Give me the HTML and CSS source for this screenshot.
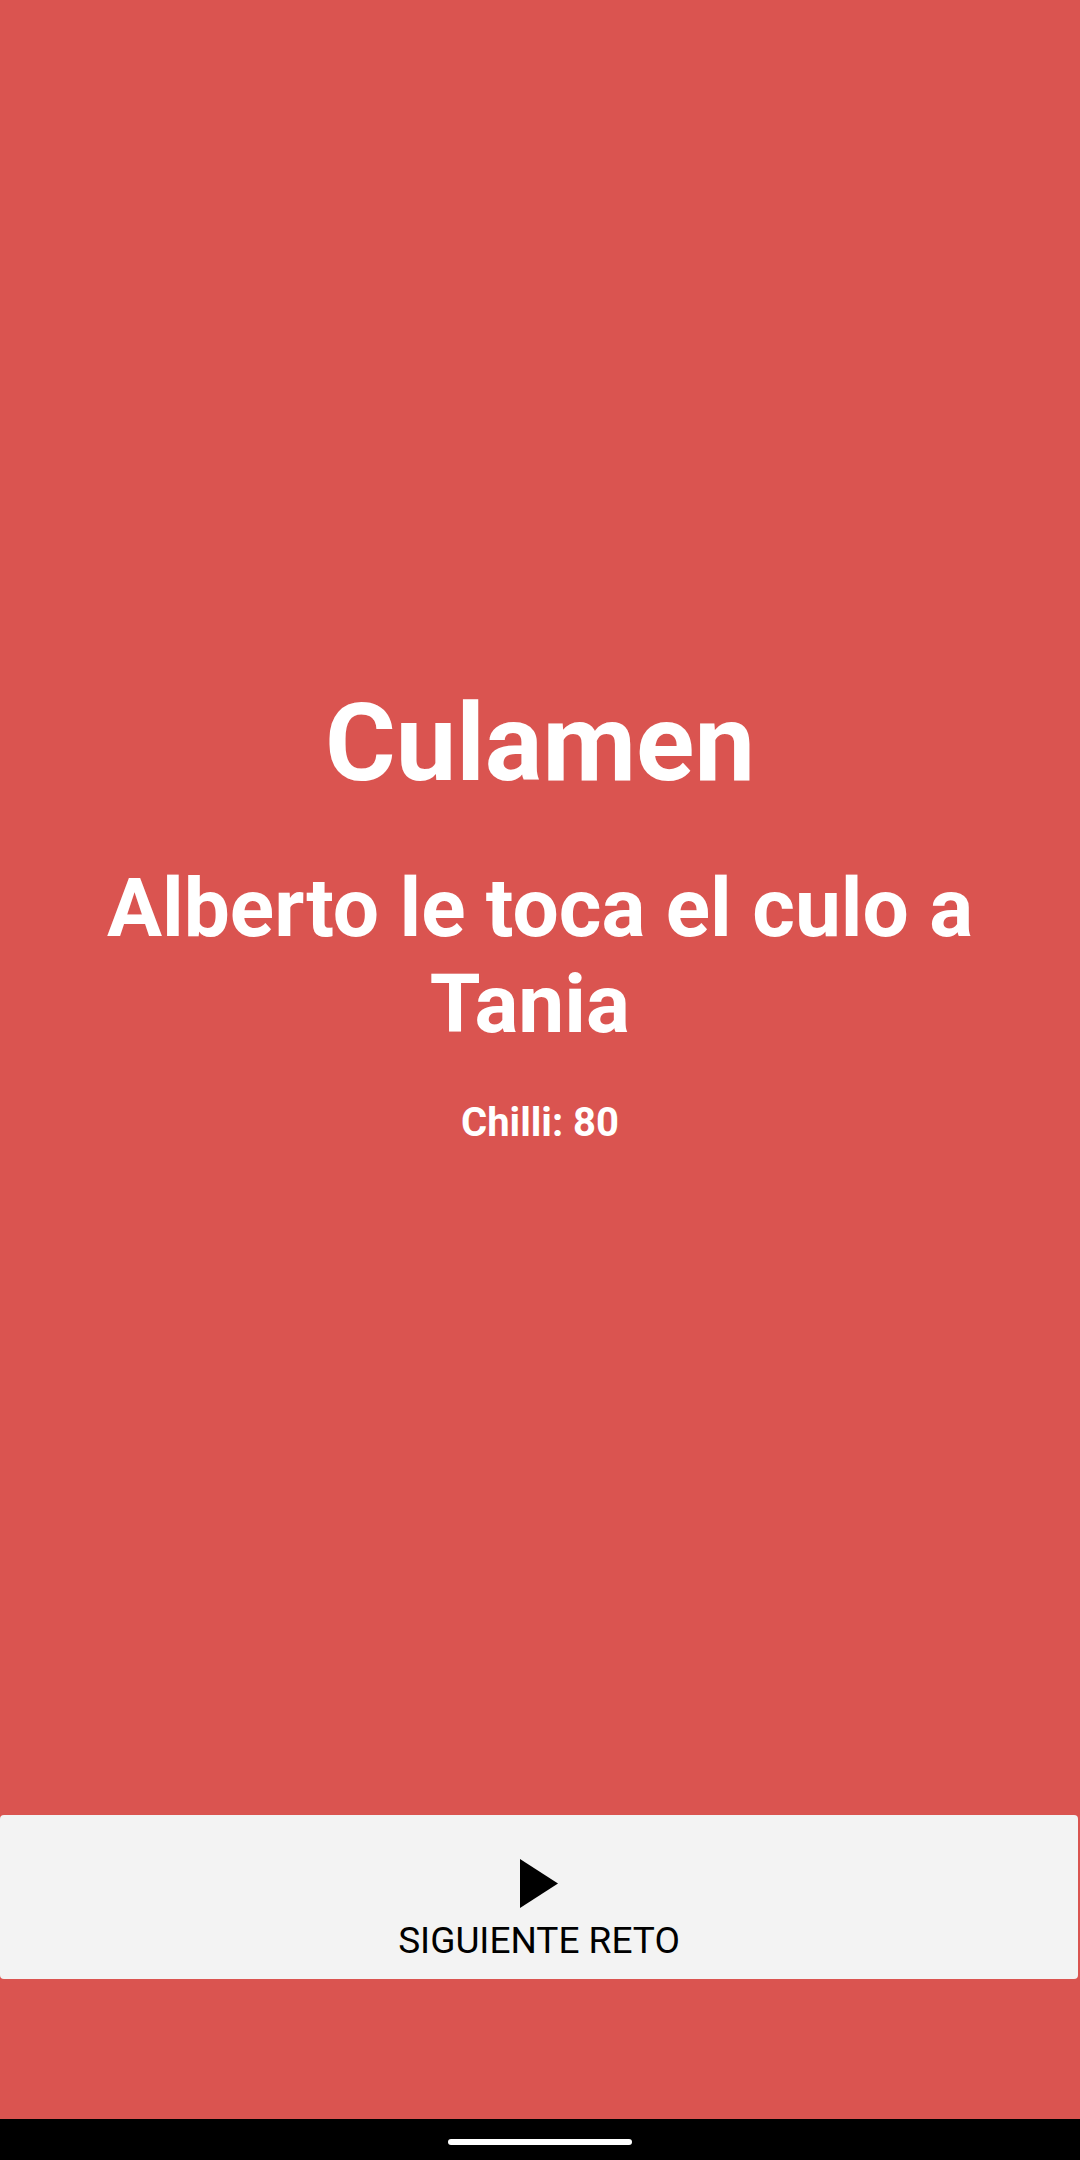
FILE: index.html
```html
<!DOCTYPE html>
<html lang="es">
<head>
<meta charset="utf-8">
<title>Culamen</title>
<link rel="stylesheet" href="styles.css">
</head>
<body>
<div class="screen">
  <main class="content">
    <h1 class="title">Culamen</h1>
    <h2 class="challenge">Alberto le toca el culo a Tania&nbsp;</h2>
    <p class="chilli">Chilli: 80</p>
  </main>
  <button class="next-btn" type="button">
    <svg class="play" width="38" height="49" viewBox="0 0 38 49" aria-hidden="true"><path d="M0 0 L38 24.5 L0 49 Z" fill="#000"/></svg>
    <span class="next-label">SIGUIENTE RETO</span>
  </button>
  <div class="spacer"></div>
  <nav class="navbar"><span class="pill"></span></nav>
</div>
</body>
</html>
```
FILE: styles.css
```css
html, body {
  margin: 0;
  padding: 0;
}
body {
  width: 1080px;
  height: 2160px;
  background: #DA5450;
  font-family: Roboto, "Liberation Sans", sans-serif;
  overflow: hidden;
}
.screen {
  display: flex;
  flex-direction: column;
  height: 2160px;
}
.content {
  display: flex;
  flex-direction: column;
  align-items: center;
  padding: 677px 60px 0;
  color: #fff;
  text-align: center;
}
.title {
  margin: 0;
  font-size: 108px;
  line-height: 132px;
  font-weight: 700;
}
.challenge {
  margin: 51px 0 0;
  font-size: 82px;
  line-height: 96px;
  font-weight: 700;
}
.chilli {
  margin: 48px 0 0;
  font-size: 40px;
  line-height: 46px;
  font-weight: 700;
}
.next-btn {
  margin: 669px 0 0;
  height: 164px;
  width: 1078px;
  border: none;
  border-radius: 4px;
  background: #F3F3F3;
  display: flex;
  flex-direction: column;
  align-items: center;
  padding: 44px 0 0;
  box-sizing: border-box;
  font-family: Roboto, "Liberation Sans", sans-serif;
}
.play {
  display: block;
}
.next-label {
  margin-top: 11px;
  font-size: 37px;
  line-height: 44px;
  color: #000;
  font-weight: 400;
}
.spacer {
  flex: 1;
}
.navbar {
  height: 41px;
  background: #000;
  display: flex;
  justify-content: center;
  align-items: flex-start;
}
.pill {
  margin-top: 20px;
  width: 184px;
  height: 6px;
  border-radius: 3px;
  background: #fff;
}
```
